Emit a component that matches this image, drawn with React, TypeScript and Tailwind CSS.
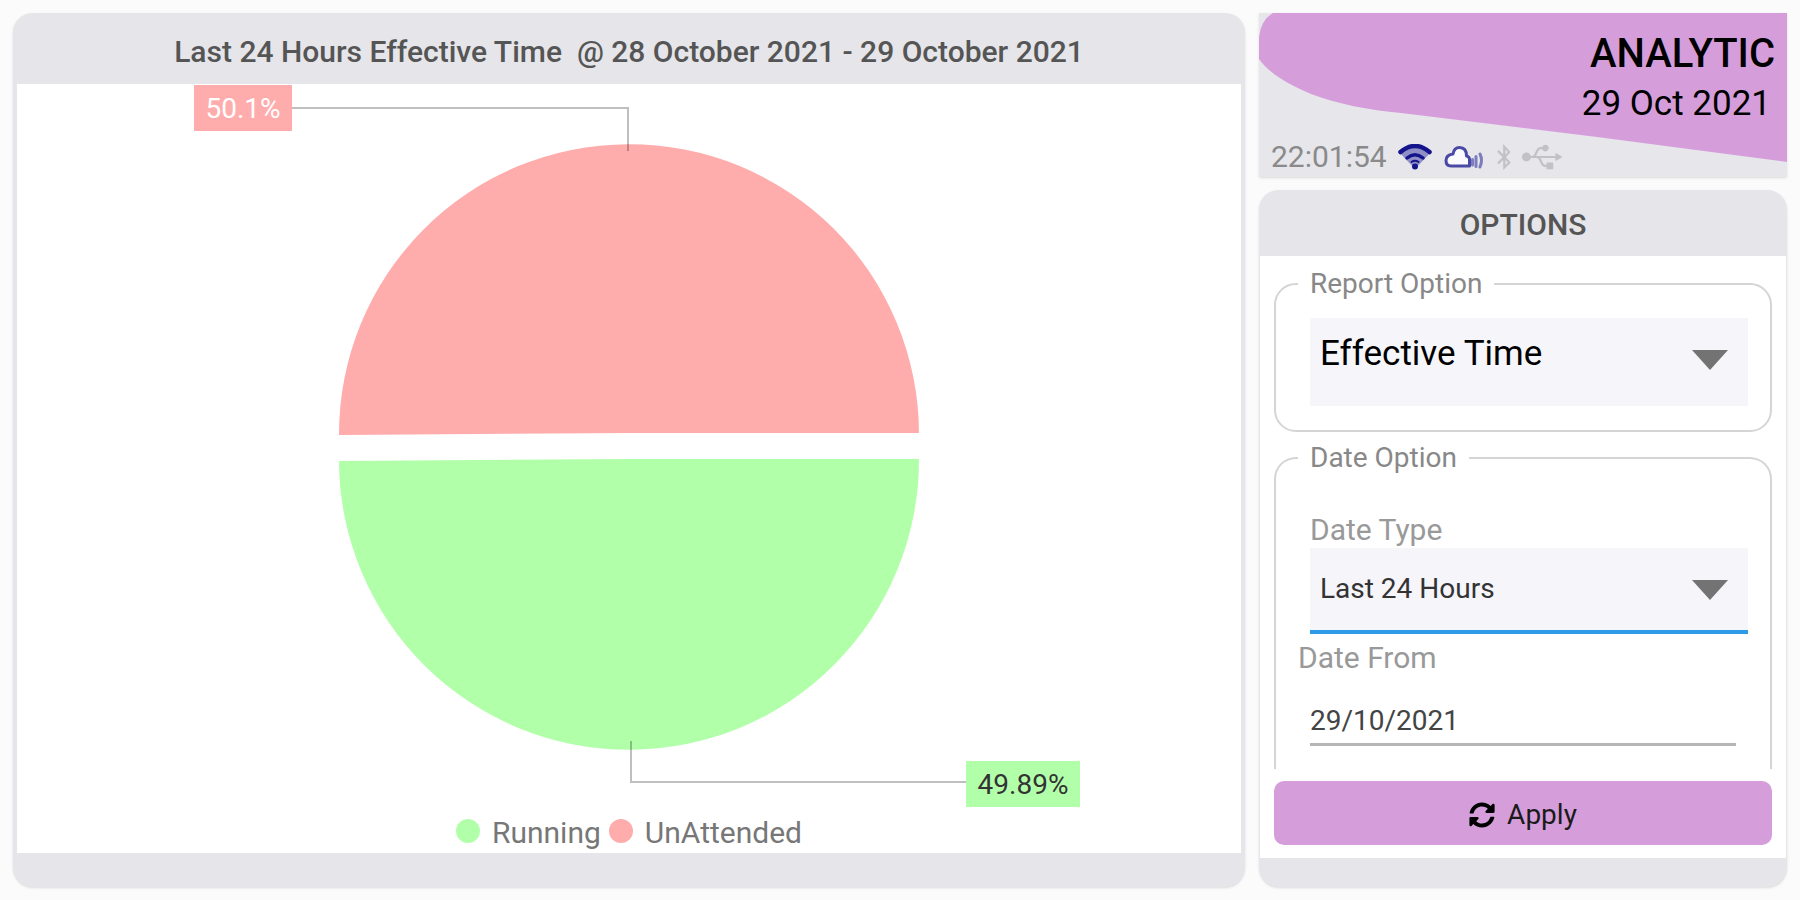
import React, { useState } from "react";
import { FaBluetoothB, FaSyncAlt, FaUsb } from "react-icons/fa";

interface Slice {
  name: string;
  value: string;
  color: string;
}

const slices: Slice[] = [
  { name: "Running", value: "49.89%", color: "#b2ffaa" },
  { name: "UnAttended", value: "50.1%", color: "#ffacac" },
];

interface SelectFieldProps {
  id: string;
  value: string;
  options: string[];
  className: string;
  onChange: (value: string) => void;
}

const SelectField: React.FC<SelectFieldProps> = ({
  id,
  value,
  options,
  className,
  onChange,
}) => (
  <div className="relative">
    <select
      id={id}
      value={value}
      onChange={(e) => onChange(e.target.value)}
      className={`block w-full appearance-none bg-[#f5f5fa] pl-[10px] pr-16 outline-none ${className}`}
    >
      {options.map((option) => (
        <option key={option}>{option}</option>
      ))}
    </select>
    <svg
      viewBox="0 0 36 20"
      className="pointer-events-none absolute right-5 top-8 h-5 w-9"
    >
      <path d="M0 0H36L18 20Z" fill="#737373" />
    </svg>
  </div>
);

const WifiIcon = () => (
  <svg viewBox="0 0 34 26" className="h-[26px] w-[34px]">
    <path d="M17 25 1 8Q17-6 33 8Z" fill="#8f8fc6" />
    <g fill="none" stroke="#14148c" strokeLinecap="round">
      <path d="M2.500 8Q17-4 31.500 8" strokeWidth="4.500" />
      <path d="M9 14Q17 7.500 25 14" strokeWidth="3.500" />
      <path d="M13.500 18Q17 15.500 20.500 18" strokeWidth="2" />
    </g>
    <circle cx="17" cy="22.500" r="3" fill="#14148c" />
  </svg>
);

const CloudIcon = () => (
  <svg viewBox="0 0 40 24" className="h-6 w-10">
    <path
      d="M7 21H25.500V14Q25 11.500 22.500 11Q22.500 2.500 15.500 2.500Q10 2.500 9 9Q2 10 2 15.500Q2 21 7 21Z"
      fill="#fbfbff"
      stroke="#4a4aa6"
      strokeWidth="3"
      strokeLinejoin="round"
    />
    <g stroke="#7d7dbe" strokeWidth="3" strokeLinecap="round">
      <path d="M28.500 14.500V20" />
      <path d="M32 11.500V21.500" />
      <path d="M36 9Q39 15 36 22" fill="none" />
    </g>
  </svg>
);

const PieChart = () => (
  <svg
    viewBox="-1 0 1224 725"
    className="block w-full font-[Roboto,sans-serif] text-[28px]"
  >
    <path d="M321 351A290 290 0 0 1 901 349L611 349Z" fill={slices[1].color} />
    <path d="M321 377L611 375L901 375A290 290 0 0 1 321 377Z" fill={slices[0].color} />
    <g fill="none" stroke="#000" strokeOpacity="0.25" strokeWidth="2">
      <path d="M273 24H610V67" />
      <path d="M613 657V698H948" />
    </g>
    <rect x="176" y="1" width="98" height="46" fill={slices[1].color} />
    <text x="225" y="34" textAnchor="middle" fill="#fff">
      {slices[1].value}
    </text>
    <rect x="948" y="677" width="114" height="46" fill={slices[0].color} />
    <text x="1005" y="710" textAnchor="middle" fill="#333">
      {slices[0].value}
    </text>
  </svg>
);

const StatusCard = () => (
  <header className="relative h-[164px] overflow-hidden bg-[#e6e6eb] shadow-sm">
    <svg
      viewBox="0 0 528 164"
      preserveAspectRatio="none"
      className="absolute inset-0 h-full w-full"
    >
      <path
        d="M14 0H528V149L338 124L142 100C110 97 78 91 52 81C28 71 10 60 0 46V24Q2 7 14 0Z"
        fill="#d59edb"
      />
    </svg>
    <div className="relative flex h-full flex-col">
      <div className="flex flex-col items-end pr-3 pt-4 text-black">
        <h1 className="text-[40px] font-medium leading-[50px]">ANALYTIC</h1>
        <p className="pr-1 text-[35px] leading-[50px]">29 Oct 2021</p>
      </div>
      <div className="mt-auto flex items-center pl-3">
        <time className="w-[127px] text-[30px] leading-10 text-[#8a8a8a]">22:01:54</time>
        <WifiIcon />
        <span className="w-3" />
        <CloudIcon />
        <FaBluetoothB className="ml-[10px] h-[26px] w-5 text-[#c2c2c4]" />
        <FaUsb className="ml-2 h-10 w-10 text-[#c2c2c4]" />
      </div>
    </div>
  </header>
);

export default function App() {
  const [report, setReport] = useState("Effective Time");
  const [dateType, setDateType] = useState("Last 24 Hours");
  const [dateFrom, setDateFrom] = useState("29/10/2021");

  return (
    <div className="grid min-h-screen grid-cols-[7fr_3fr] gap-[14px] bg-[#fbfbfb] p-[13px] font-[Roboto,sans-serif]">
      {/* Chart panel */}
      <main className="flex flex-col overflow-hidden rounded-[20px] bg-[#e5e5ea] shadow-sm">
        <h2 className="whitespace-pre pt-[7px] text-center text-[30px] font-medium leading-[64px] text-[#555]">
          {"Last 24 Hours Effective Time  @ 28 October 2021 - 29 October 2021"}
        </h2>
        <div className="mx-1 flex flex-1 flex-col bg-white">
          <PieChart />
          <ul className="flex justify-center gap-2 pt-1 text-[30px] leading-10 text-[#777]">
            {slices.map((slice) => (
              <li key={slice.name} className="flex items-center gap-3">
                <svg viewBox="0 0 24 28" className="h-7 w-6">
                  <circle cx="12" cy="12" r="12" fill={slice.color} />
                </svg>
                {slice.name}
              </li>
            ))}
          </ul>
        </div>
        <div className="h-[34px]" />
      </main>

      {/* Side column */}
      <div className="flex flex-col gap-[13px]">
        <StatusCard />

        <form
          onSubmit={(e) => e.preventDefault()}
          className="flex flex-1 flex-col overflow-hidden rounded-[20px] bg-[#e5e5ea] shadow-sm"
        >
          <h2 className="pt-1 text-center text-[30px] font-medium leading-[62px] text-[#555]">
            OPTIONS
          </h2>
          <div className="mx-px flex flex-1 flex-col bg-white px-[14px] pb-[13px] pt-[10px]">
            <fieldset className="rounded-[22px] border-[2px] border-[#d5d5d5] pb-[24px] pl-[34px] pr-[22px]">
              <legend className="-ml-3 px-3 text-[28px] leading-9 text-[#888]">
                <label htmlFor="report">Report Option</label>
              </legend>
              <div className="pt-4">
                <SelectField
                  id="report"
                  value={report}
                  options={["Effective Time", "Downtime", "Output"]}
                  onChange={setReport}
                  className="h-[88px] pb-4 text-[35px] text-black"
                />
              </div>
            </fieldset>

            <fieldset className="mt-2 flex-1 rounded-t-[22px] border-[2px] border-b-0 border-[#d5d5d5] pl-[34px] pr-[22px]">
              <legend className="-ml-3 px-3 text-[28px] leading-9 text-[#888]">
                Date Option
              </legend>
              <label
                htmlFor="dateType"
                className="block pt-9 text-[30px] leading-9 text-[#999]"
              >
                Date Type
              </label>
              <SelectField
                id="dateType"
                value={dateType}
                options={["Last 24 Hours", "Daily", "Custom"]}
                onChange={setDateType}
                className="h-[86px] border-b-4 border-[#2c9be8] text-[28px] text-[#333]"
              />
              <label
                htmlFor="dateFrom"
                className="-ml-3 block pt-1 text-[30px] leading-10 text-[#999]"
              >
                Date From
              </label>
              <div className="pr-3">
                <input
                  id="dateFrom"
                  type="text"
                  value={dateFrom}
                  onChange={(e) => setDateFrom(e.target.value)}
                  className="mt-5 block h-12 w-full border-b-[3px] border-[#b5b5b5] text-[28px] text-[#444] outline-none"
                />
              </div>
            </fieldset>

            <button
              type="submit"
              className="mt-3 flex h-16 items-center justify-center gap-3 rounded-[10px] bg-[#d59edb] pt-1 text-[28px] text-[#1a1a1a]"
            >
              <FaSyncAlt className="h-[26px] w-[26px] text-black" />
              Apply
            </button>
          </div>
          <div className="h-[29px]" />
        </form>
      </div>
    </div>
  );
}
